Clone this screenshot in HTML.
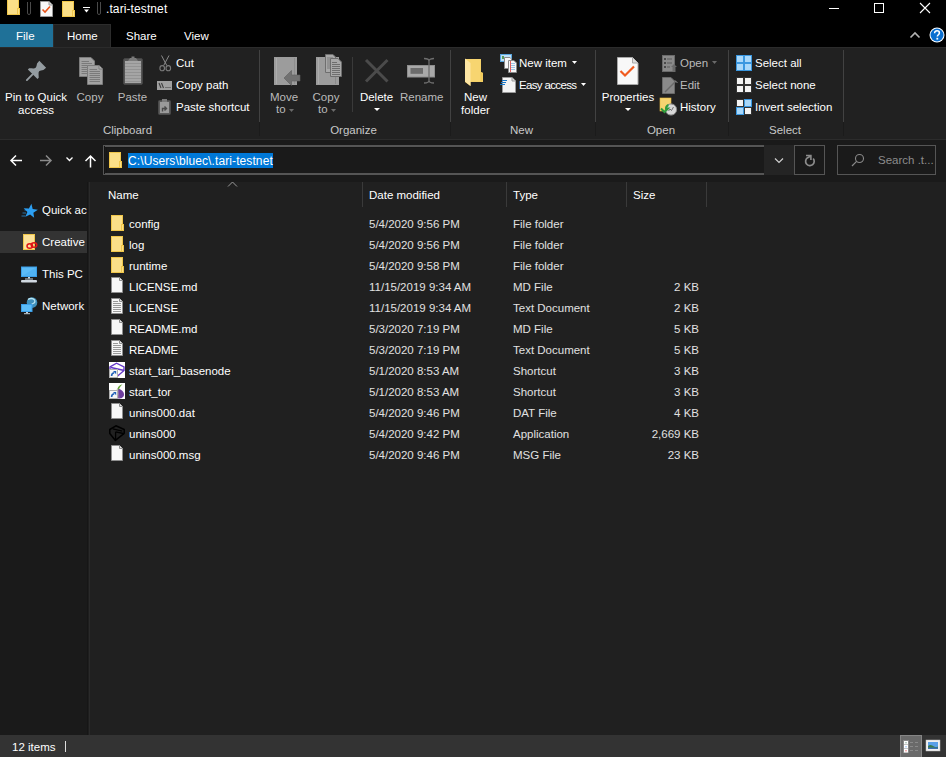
<!DOCTYPE html>
<html><head><meta charset="utf-8">
<style>
*{margin:0;padding:0;box-sizing:border-box}
html,body{width:946px;height:757px;overflow:hidden;background:#202020}
body{position:relative;font-family:"Liberation Sans",sans-serif;font-size:11.5px;color:#fff}
.a{position:absolute}
.t{position:absolute;line-height:14px;white-space:nowrap}
.c{text-align:center}
.g{color:#bababa}
.lbl{color:#c8c8c8}
.s{color:#e0e0e0}
svg{position:absolute;overflow:visible}
</style></head><body>
<!-- top black bars -->
<div class="a" style="left:0;top:0;width:946px;height:47px;background:#000"></div>
<!-- ribbon -->
<div class="a" style="left:0;top:47px;width:946px;height:92px;background:#212121;border-top:1px solid #2b2b2b"></div>
<div class="a" style="left:0;top:139px;width:946px;height:1px;background:#2c2c2c"></div>
<!-- address row -->
<div class="a" style="left:0;top:140px;width:946px;height:42px;background:#1a1a1a"></div>
<!-- nav pane -->
<div class="a" style="left:0;top:182px;width:87px;height:553px;background:#1a1a1a"></div>
<div class="a" style="left:87px;top:182px;width:1px;height:553px;background:#161616"></div>
<div class="a" style="left:88px;top:182px;width:1px;height:553px;background:#1e1e1e"></div>
<div class="a" style="left:89px;top:182px;width:1px;height:553px;background:#2a2a2a"></div>
<div class="a" style="left:0;top:231px;width:87px;height:22px;background:#333"></div>
<!-- status bar -->
<div class="a" style="left:0;top:735px;width:946px;height:22px;background:#333"></div>

<!-- TITLE BAR -->
<div class="t" style="left:106px;top:2px;font-size:12px;letter-spacing:0.1px">.tari-testnet</div>

<!-- TABS -->
<div class="a" style="left:0;top:24px;width:53px;height:23px;background:#1f7198"></div>
<div class="a" style="left:53px;top:24px;width:58px;height:23px;background:#202020;border:1px solid #2c2c2c;border-bottom:none"></div>
<div class="t" style="left:16px;top:29px">File</div>
<div class="t" style="left:67px;top:29px">Home</div>
<div class="t" style="left:126px;top:29px">Share</div>
<div class="t" style="left:184px;top:29px">View</div>


<!-- ICONS: title bar -->
<svg style="left:7px;top:-1px" width="14" height="16"><rect x="0" y="0" width="12" height="16" fill="#f0c64a"/><rect x="1" y="1" width="10" height="14" fill="#fbdf88"/><rect x="10" y="9" width="3" height="7" fill="#f0c64a"/><rect x="11" y="10" width="1" height="5" fill="#fbdf88"/></svg>
<svg style="left:27px;top:2px" width="4" height="13"><path d="M0.5 0V11A1.5 1.5 0 0 0 3.5 11V0" fill="none" stroke="#4a4a4a"/></svg>
<svg style="left:40px;top:1px" width="13" height="16"><path d="M0.5 0.5H9L12.5 4V15.5H0.5Z" fill="#f7f7f7" stroke="#9a9a9a"/><path d="M9 0.5V4H12.5" fill="#dcdcdc" stroke="#9a9a9a"/><path d="M2.5 8.5L5 11L10 5.5" fill="none" stroke="#e8541a" stroke-width="1.6"/></svg>
<svg style="left:62px;top:1px" width="14" height="16"><rect x="0" y="0" width="12" height="16" fill="#f0c64a"/><rect x="1" y="1" width="10" height="14" fill="#fbdf88"/><rect x="10" y="9" width="3" height="7" fill="#f0c64a"/><rect x="11" y="10" width="1" height="5" fill="#fbdf88"/></svg>
<svg style="left:83px;top:6px" width="8" height="7"><rect x="0" y="1" width="7" height="1" fill="#fff"/><path d="M1 3.5H6L3.5 6.5Z" fill="#fff"/></svg>
<svg style="left:97px;top:2px" width="4" height="13"><path d="M0.5 0V11A1.5 1.5 0 0 0 3.5 11V0" fill="none" stroke="#4a4a4a"/></svg>
<!-- window controls -->
<div class="a" style="left:829px;top:8px;width:10px;height:1px;background:#fff"></div>
<div class="a" style="left:874px;top:3px;width:10px;height:10px;border:1px solid #fff"></div>
<svg style="left:919px;top:2px" width="12" height="12"><path d="M1 1L11 11M11 1L1 11" stroke="#fff" stroke-width="1.1"/></svg>
<svg style="left:909px;top:31px" width="12" height="8"><path d="M1.5 6.5L6 2L10.5 6.5" fill="none" stroke="#b4b4b4" stroke-width="1.6"/></svg>
<svg style="left:929px;top:27px" width="17" height="17"><circle cx="8" cy="8" r="7.5" fill="#fff"/><circle cx="8" cy="8" r="6.5" fill="#0a6fd0"/><path d="M5.6 6.2C5.6 4.6 6.7 3.8 8 3.8C9.4 3.8 10.4 4.7 10.4 5.9C10.4 7.6 8.3 7.8 8.3 9.6" fill="none" stroke="#fff" stroke-width="1.5"/><rect x="7.4" y="10.8" width="1.8" height="1.8" fill="#fff"/></svg>

<!-- ribbon: clipboard -->
<svg style="left:20px;top:54px" width="32" height="32"><g transform="translate(22.7,10.25) rotate(45)"><path d="M-4.8 0H4.8L4.5 3.5C3.6 5 2.5 6 2.5 7.5C2.5 9 5 10.5 6.8 12.4V14.2H-6.8V12.4C-5 10.5 -2.5 9 -2.5 7.5C-2.5 6 -3.6 5 -4.5 3.5Z" fill="#949ca1"/><rect x="-0.95" y="13.5" width="1.9" height="9.8" rx="0.9" fill="#949ca1"/></g></svg>
<svg style="left:79px;top:57px" width="25" height="29"><path d="M0.5 0.5H12L15.5 4V19.5H0.5Z" fill="#a3a3a3" stroke="#7c7c7c"/><path d="M2.5 4.5H10M2.5 6.5H13M2.5 8.5H13M2.5 10.5H13M2.5 12.5H13M2.5 14.5H13M2.5 16.5H13" stroke="#7a7a7a"/><path d="M8.5 8.5H20L23.5 12V27.5H8.5Z" fill="#a3a3a3" stroke="#7c7c7c"/><path d="M20 8.5V12H23.5" fill="#b8b8b8" stroke="#7c7c7c"/><path d="M10.5 12.5H18M10.5 14.5H21M10.5 16.5H21M10.5 18.5H21M10.5 20.5H21M10.5 22.5H21M10.5 24.5H21" stroke="#7a7a7a"/></svg>
<svg style="left:123px;top:55px" width="21" height="31"><rect x="0.5" y="3.5" width="19" height="26" rx="1.5" fill="#555" stroke="#444"/><rect x="2" y="6" width="16" height="22" fill="#a5a5a5"/><path d="M2 8.5H18M2 11.5H18M2 14.5H18M2 17.5H18M2 20.5H18M2 23.5H18M2 26.5H18" stroke="#939393"/><path d="M5 6L7 3H8.5V1.5H11.5V3H13L15 6Z" fill="#7a7a7a"/></svg>
<svg style="left:159px;top:55px" width="13" height="17"><path d="M2.5 0.5L7.8 10.5M10 0.5L4.7 10.5" stroke="#8a8a8a" stroke-width="1"/><ellipse cx="3.2" cy="13.2" rx="2.3" ry="2.6" fill="none" stroke="#7a7a7a" stroke-width="1.1"/><ellipse cx="9.3" cy="13.2" rx="2.3" ry="2.6" fill="none" stroke="#7a7a7a" stroke-width="1.1"/></svg>
<svg style="left:157px;top:81px" width="16" height="10"><rect x="0" y="0" width="15" height="9" fill="#a0a0a0"/><path d="M2 2L4 7M4.5 2L6.5 7" stroke="#3e3e3e" stroke-width="1.1"/><path d="M8.5 6.5H9.5M10.5 6.5H11.5M12.5 6.5H13.5" stroke="#3e3e3e" stroke-width="1"/></svg>
<svg style="left:158px;top:99px" width="14" height="16"><rect x="0.5" y="1.5" width="12" height="14" rx="1" fill="#5a5a5a" stroke="#4a4a4a"/><rect x="2" y="3" width="9" height="11" fill="#9a9a9a"/><rect x="4" y="0" width="5" height="3" fill="#7a7a7a"/><path d="M4.5 12.5V9.5H8M6.5 7.5L8.5 9.5L6.5 11.5" fill="none" stroke="#4a4a4a" stroke-width="1.4"/></svg>
<div class="a" style="left:259px;top:50px;width:1px;height:72px;background:#424242"></div>
<div class="a" style="left:259px;top:122px;width:1px;height:14px;background:#1b1b1b"></div>


<!-- organize -->
<svg style="left:273px;top:56px" width="28" height="31"><rect x="1" y="1" width="23" height="28" fill="#9c9c9c"/><rect x="3" y="2" width="1" height="26" fill="#acacac"/><rect x="21" y="2" width="1" height="26" fill="#8e8e8e"/><path d="M11 22L18.5 14.5V19H27V25H18.5V29.5Z" fill="#717171"/><path d="M11 22L18.5 14.5V19H27V25H18.5V29.5Z" fill="none" stroke="#5e5e5e" stroke-width="0.6"/></svg>
<svg style="left:315px;top:54px" width="29" height="33"><rect x="1" y="3" width="23" height="28" fill="#9c9c9c"/><rect x="3" y="4" width="1" height="26" fill="#acacac"/><rect x="20" y="20" width="1" height="10" fill="#8a8a8a"/><path d="M10.5 0.5H18L20.5 3V18.5H10.5Z" fill="#a8a8a8" stroke="#6e6e6e"/><path d="M12 4H18M12 6H19M12 8H19M12 10H19M12 12H19M12 14H19" stroke="#7a7a7a"/><path d="M15.5 4.5H23L26.5 8V22.5H15.5Z" fill="#a8a8a8" stroke="#6e6e6e"/><path d="M17 8.5H22M17 10.5H25M17 12.5H25M17 14.5H25M17 16.5H25M17 18.5H25M17 20.5H25" stroke="#6e6e6e"/></svg>
<div class="a" style="left:352px;top:57px;width:1px;height:55px;background:#3a3a3a"></div>
<svg style="left:364px;top:58px" width="26" height="26"><path d="M2 2L23.5 23.5M23.5 2L2 23.5" stroke="#4b4b4b" stroke-width="3"/></svg>
<svg style="left:374px;top:108px" width="7" height="4"><path d="M0 0H6L3 3Z" fill="#fff"/></svg>
<svg style="left:406px;top:57px" width="30" height="28"><rect x="1.5" y="8.5" width="27" height="11.5" fill="#a9a9a9" stroke="#8e8e8e"/><rect x="4.5" y="11" width="12.5" height="5.8" fill="#6c6c6c"/><path d="M18 1.5C20.5 1.5 23 2.2 23 4C23 2.2 25.5 1.5 28 1.5M23 4V24M18 26C20.5 26 23 25.3 23 23.5C23 25.3 25.5 26 28 26" fill="none" stroke="#6e6e6e" stroke-width="1.3"/></svg>
<div class="a" style="left:450px;top:50px;width:1px;height:72px;background:#424242"></div>
<div class="a" style="left:450px;top:122px;width:1px;height:14px;background:#1b1b1b"></div>
<!-- new -->
<svg style="left:464px;top:58px" width="21" height="29"><path d="M1 1H17V14L19 15V24H6.5L6.5 28L1 24Z" fill="#f3cd60"/><path d="M1 1H16.5V14.5L18.5 15.5V23.5H1Z" fill="#f7d570"/><rect x="16.5" y="14.5" width="2" height="9" fill="#f2cb5a"/><path d="M1 0.5L6.5 5V28L1 23.5Z" fill="#fde6a4"/></svg>
<svg style="left:500px;top:54px" width="18" height="19"><rect x="0.5" y="0.5" width="11" height="7" fill="#bfe0f7" stroke="#5aa7e0"/><rect x="2" y="2" width="2" height="3" fill="#5a9a5a"/><path d="M4.5 3.5H10L11.5 5V14.5H4.5Z" fill="#f8f8f8" stroke="#8a8a8a"/><path d="M8.5 6.5H14L16.5 9V18.5H8.5Z" fill="#f8f8f8" stroke="#8a8a8a"/><path d="M10 9.5H15M10 11.5H15M10 13.5H15M10 15.5H15" stroke="#9cc4e8"/><path d="M10.5 7V18" stroke="#e06060"/></svg>
<svg style="left:572px;top:61px" width="6" height="4"><path d="M0 0H5L2.5 3Z" fill="#fff"/></svg>
<svg style="left:500px;top:77px" width="17" height="17"><path d="M2.5 0.5H12L15.5 4V15.5H2.5Z" fill="#f4f4f4" stroke="#9a9a9a"/><path d="M12 0.5V4H15.5" fill="#dcdcdc" stroke="#9a9a9a"/><path d="M2 3.5H7M1 5.5H6M0 7.5H5" stroke="#1a78c8" stroke-width="1"/></svg>
<svg style="left:581px;top:83px" width="6" height="4"><path d="M0 0H5L2.5 3Z" fill="#fff"/></svg>
<div class="a" style="left:595px;top:50px;width:1px;height:72px;background:#424242"></div>
<div class="a" style="left:595px;top:122px;width:1px;height:14px;background:#1b1b1b"></div>
<!-- open -->
<svg style="left:617px;top:57px" width="22" height="29"><path d="M0.5 0.5H15.5L21 6V27.5H0.5Z" fill="#f8f8f8" stroke="#a8a8a8"/><path d="M15.5 0.5V6H21" fill="#dedede" stroke="#a8a8a8"/><path d="M3.5 14L8 18.5L17 9.5" fill="none" stroke="#f05a1e" stroke-width="2.2"/></svg>
<svg style="left:625px;top:108px" width="7" height="4"><path d="M0 0H6L3 3Z" fill="#fff"/></svg>
<svg style="left:662px;top:55px" width="16" height="18"><rect x="0.5" y="0.5" width="12" height="16" fill="#8a8a8a" stroke="#6a6a6a"/><rect x="2" y="3" width="2" height="2" fill="#4a4a4a"/><rect x="2" y="7" width="2" height="2" fill="#4a4a4a"/><rect x="2" y="11" width="2" height="2" fill="#4a4a4a"/><path d="M5 4H10M5 8H10M5 12H8" stroke="#5a5a5a"/><path d="M9 12L12 9L15 12H13.5V17H10.5V12Z" fill="#6a6a6a"/></svg>
<svg style="left:712px;top:61px" width="6" height="4"><path d="M0 0H5L2.5 3Z" fill="#6a6a6a"/></svg>
<svg style="left:662px;top:77px" width="16" height="18"><path d="M0.5 0.5H9L12.5 4V16.5H0.5Z" fill="#8a8a8a" stroke="#6a6a6a"/><path d="M3 15L14 4" stroke="#6a6a6a" stroke-width="1.4"/><path d="M13 3.5L15.5 6" stroke="#8a8a8a" stroke-width="1"/></svg>
<svg style="left:660px;top:98px" width="18" height="18"><rect x="0" y="0" width="11" height="13" fill="#f6d470" stroke="#e6b840" stroke-width="0.6"/><circle cx="11" cy="11.5" r="5.6" fill="#d8d8d8" stroke="#8a8a8a"/><path d="M8.5 13L10 11L11.5 12.5L13.5 9" stroke="#555" stroke-width="0.8" fill="none"/><path d="M1 10.5L4.5 14L8 10.5H6C6 8.5 7 7.5 8.5 7" fill="none" stroke="#2e9a3a" stroke-width="2"/></svg>
<div class="a" style="left:728px;top:50px;width:1px;height:72px;background:#424242"></div>
<div class="a" style="left:728px;top:122px;width:1px;height:14px;background:#1b1b1b"></div>
<!-- select -->
<svg style="left:736px;top:55px" width="16" height="16"><rect x="0" y="0" width="16" height="16" fill="#3a97e0"/><rect x="1" y="1" width="6" height="6" fill="#a9d8fa"/><rect x="9" y="1" width="6" height="6" fill="#a9d8fa"/><rect x="1" y="9" width="6" height="6" fill="#a9d8fa"/><rect x="9" y="9" width="6" height="6" fill="#a9d8fa"/></svg>
<svg style="left:736px;top:77px" width="16" height="16"><rect x="0" y="0" width="16" height="16" fill="#333"/><rect x="1" y="1" width="6" height="6" fill="#f4f4f4"/><rect x="9" y="1" width="6" height="6" fill="#f4f4f4"/><rect x="1" y="9" width="6" height="6" fill="#f4f4f4"/><rect x="9" y="9" width="6" height="6" fill="#f4f4f4"/></svg>
<svg style="left:736px;top:99px" width="16" height="16"><rect x="0" y="0" width="8" height="8" fill="#333"/><rect x="8" y="0" width="8" height="8" fill="#3a97e0"/><rect x="0" y="8" width="8" height="8" fill="#3a97e0"/><rect x="8" y="8" width="8" height="8" fill="#333"/><rect x="1" y="1" width="6" height="6" fill="#f4f4f4"/><rect x="9" y="1" width="6" height="6" fill="#a9d8fa"/><rect x="1" y="9" width="6" height="6" fill="#a9d8fa"/><rect x="9" y="9" width="6" height="6" fill="#f4f4f4"/></svg>
<div class="a" style="left:843px;top:50px;width:1px;height:72px;background:#424242"></div>
<div class="a" style="left:843px;top:122px;width:1px;height:14px;background:#1b1b1b"></div>
<!-- move to / copy to arrows -->
<svg style="left:289px;top:109px" width="6" height="4"><path d="M0 0H5L2.5 3Z" fill="#6a6a6a"/></svg>
<svg style="left:331px;top:109px" width="6" height="4"><path d="M0 0H5L2.5 3Z" fill="#6a6a6a"/></svg>

<!-- RIBBON TEXT -->
<div class="t c" style="left:0;top:90px;width:72px">Pin to Quick</div>
<div class="t c" style="left:0;top:103px;width:72px">access</div>
<div class="t c g" style="left:70px;top:90px;width:40px">Copy</div>
<div class="t c g" style="left:112px;top:90px;width:41px">Paste</div>
<div class="t c lbl" style="left:90px;top:123px;width:75px">Clipboard</div>
<div class="t" style="left:176px;top:56px">Cut</div>
<div class="t" style="left:176px;top:78px">Copy path</div>
<div class="t" style="left:176px;top:100px">Paste shortcut</div>

<div class="t c g" style="left:264px;top:90px;width:40px">Move</div>
<div class="t c g" style="left:306px;top:90px;width:40px">Copy</div>
<div class="t g" style="left:276px;top:102px">to</div>
<div class="t g" style="left:318px;top:102px">to</div>
<div class="t c" style="left:356px;top:90px;width:41px">Delete</div>
<div class="t c g" style="left:400px;top:90px;width:41px">Rename</div>
<div class="t c lbl" style="left:315px;top:123px;width:77px">Organize</div>

<div class="t c" style="left:455px;top:90px;width:41px">New</div>
<div class="t c" style="left:455px;top:103px;width:41px">folder</div>
<div class="t" style="left:519px;top:56px">New item</div>
<div class="t" style="left:519px;top:78px;letter-spacing:-0.65px">Easy access</div>
<div class="t c lbl" style="left:496px;top:123px;width:51px">New</div>

<div class="t c" style="left:600px;top:90px;width:56px">Properties</div>
<div class="t g" style="left:680px;top:56px">Open</div>
<div class="t g" style="left:680px;top:78px">Edit</div>
<div class="t" style="left:680px;top:100px">History</div>
<div class="t c lbl" style="left:631px;top:123px;width:60px">Open</div>

<div class="t" style="left:755px;top:56px">Select all</div>
<div class="t" style="left:755px;top:78px">Select none</div>
<div class="t" style="left:755px;top:100px">Invert selection</div>
<div class="t c lbl" style="left:760px;top:123px;width:50px">Select</div>

<!-- ADDRESS -->
<div class="a" style="left:103px;top:145px;width:661px;height:30px;border:2px solid #555;border-right:none;background:#1a1a1a"></div>
<div class="a" style="left:104px;top:146px;width:1px;height:28px;background:#141414"></div>
<div class="a" style="left:105px;top:147px;width:659px;height:1px;background:#161616"></div>
<div class="a" style="left:106px;top:147px;width:1px;height:26px;background:#161616"></div>
<div class="a" style="left:764px;top:145px;width:30px;height:30px;background:#242424"></div>
<div class="a" style="left:794px;top:145px;width:31px;height:30px;border:1px solid #555"></div>
<div class="a" style="left:837px;top:145px;width:99px;height:30px;border:1px solid #555"></div>
<div class="a" style="left:128px;top:153px;width:145px;height:15px;background:#0078d7"></div>
<div class="t" style="left:128px;top:154px;font-size:12px;letter-spacing:0.1px">C:\Users\bluec\.tari-testnet</div>
<div class="t" style="left:878px;top:153px;color:#8c8c8c">Search .t...</div>

<!-- HEADERS -->
<div class="t" style="left:108px;top:188px">Name</div>
<div class="t" style="left:369px;top:188px">Date modified</div>
<div class="t" style="left:513px;top:188px">Type</div>
<div class="t" style="left:633px;top:188px">Size</div>
<div class="a" style="left:362px;top:182px;width:1px;height:25px;background:#3a3a3a"></div>
<div class="a" style="left:506px;top:182px;width:1px;height:25px;background:#3a3a3a"></div>
<div class="a" style="left:626px;top:182px;width:1px;height:25px;background:#3a3a3a"></div>
<div class="a" style="left:706px;top:182px;width:1px;height:25px;background:#3a3a3a"></div>

<!-- ROWS -->
<div class="t" style="left:129px;top:217px">config</div>
<div class="t s" style="left:369px;top:217px">5/4/2020 9:56 PM</div>
<div class="t s" style="left:513px;top:217px">File folder</div>
<div class="t" style="left:129px;top:238px">log</div>
<div class="t s" style="left:369px;top:238px">5/4/2020 9:56 PM</div>
<div class="t s" style="left:513px;top:238px">File folder</div>
<div class="t" style="left:129px;top:259px">runtime</div>
<div class="t s" style="left:369px;top:259px">5/4/2020 9:58 PM</div>
<div class="t s" style="left:513px;top:259px">File folder</div>
<div class="t" style="left:129px;top:280px">LICENSE.md</div>
<div class="t s" style="left:369px;top:280px">11/15/2019 9:34 AM</div>
<div class="t s" style="left:513px;top:280px">MD File</div>
<div class="t s" style="left:600px;width:99px;text-align:right;top:280px">2 KB</div>
<div class="t" style="left:129px;top:301px">LICENSE</div>
<div class="t s" style="left:369px;top:301px">11/15/2019 9:34 AM</div>
<div class="t s" style="left:513px;top:301px">Text Document</div>
<div class="t s" style="left:600px;width:99px;text-align:right;top:301px">2 KB</div>
<div class="t" style="left:129px;top:322px">README.md</div>
<div class="t s" style="left:369px;top:322px">5/3/2020 7:19 PM</div>
<div class="t s" style="left:513px;top:322px">MD File</div>
<div class="t s" style="left:600px;width:99px;text-align:right;top:322px">5 KB</div>
<div class="t" style="left:129px;top:343px">README</div>
<div class="t s" style="left:369px;top:343px">5/3/2020 7:19 PM</div>
<div class="t s" style="left:513px;top:343px">Text Document</div>
<div class="t s" style="left:600px;width:99px;text-align:right;top:343px">5 KB</div>
<div class="t" style="left:129px;top:364px">start_tari_basenode</div>
<div class="t s" style="left:369px;top:364px">5/1/2020 8:53 AM</div>
<div class="t s" style="left:513px;top:364px">Shortcut</div>
<div class="t s" style="left:600px;width:99px;text-align:right;top:364px">3 KB</div>
<div class="t" style="left:129px;top:385px">start_tor</div>
<div class="t s" style="left:369px;top:385px">5/1/2020 8:53 AM</div>
<div class="t s" style="left:513px;top:385px">Shortcut</div>
<div class="t s" style="left:600px;width:99px;text-align:right;top:385px">3 KB</div>
<div class="t" style="left:129px;top:406px">unins000.dat</div>
<div class="t s" style="left:369px;top:406px">5/4/2020 9:46 PM</div>
<div class="t s" style="left:513px;top:406px">DAT File</div>
<div class="t s" style="left:600px;width:99px;text-align:right;top:406px">4 KB</div>
<div class="t" style="left:129px;top:427px">unins000</div>
<div class="t s" style="left:369px;top:427px">5/4/2020 9:42 PM</div>
<div class="t s" style="left:513px;top:427px">Application</div>
<div class="t s" style="left:600px;width:99px;text-align:right;top:427px">2,669 KB</div>
<div class="t" style="left:129px;top:448px">unins000.msg</div>
<div class="t s" style="left:369px;top:448px">5/4/2020 9:46 PM</div>
<div class="t s" style="left:513px;top:448px">MSG File</div>
<div class="t s" style="left:600px;width:99px;text-align:right;top:448px">23 KB</div>

<svg style="left:111px;top:215px" width="14" height="16"><rect x="0" y="0" width="12" height="16" fill="#f0c64a"/><rect x="1" y="1" width="10" height="14" fill="#fbdf88"/><rect x="10" y="9" width="3" height="7" fill="#f0c64a"/><rect x="11" y="10" width="1" height="5" fill="#fbdf88"/></svg>
<svg style="left:111px;top:236px" width="14" height="16"><rect x="0" y="0" width="12" height="16" fill="#f0c64a"/><rect x="1" y="1" width="10" height="14" fill="#fbdf88"/><rect x="10" y="9" width="3" height="7" fill="#f0c64a"/><rect x="11" y="10" width="1" height="5" fill="#fbdf88"/></svg>
<svg style="left:111px;top:257px" width="14" height="16"><rect x="0" y="0" width="12" height="16" fill="#f0c64a"/><rect x="1" y="1" width="10" height="14" fill="#fbdf88"/><rect x="10" y="9" width="3" height="7" fill="#f0c64a"/><rect x="11" y="10" width="1" height="5" fill="#fbdf88"/></svg>
<svg style="left:111px;top:277px" width="13" height="16"><path d="M0.5 0.5H8.5L11.5 3.5V15.5H0.5Z" fill="#f7f7f7" stroke="#8e8e8e"/><path d="M8.5 0.5V3.5H11.5" fill="#e4e4e4" stroke="#8e8e8e"/></svg>
<svg style="left:111px;top:298px" width="13" height="16"><path d="M0.5 0.5H8.5L11.5 3.5V15.5H0.5Z" fill="#f7f7f7" stroke="#8e8e8e"/><path d="M8.5 0.5V3.5H11.5" fill="#e4e4e4" stroke="#8e8e8e"/><path d="M2 3.5H7M2 5.5H10M2 7.5H10M2 9.5H10M2 11.5H10M2 13.5H10" stroke="#9a9a9a"/></svg>
<svg style="left:111px;top:319px" width="13" height="16"><path d="M0.5 0.5H8.5L11.5 3.5V15.5H0.5Z" fill="#f7f7f7" stroke="#8e8e8e"/><path d="M8.5 0.5V3.5H11.5" fill="#e4e4e4" stroke="#8e8e8e"/></svg>
<svg style="left:111px;top:340px" width="13" height="16"><path d="M0.5 0.5H8.5L11.5 3.5V15.5H0.5Z" fill="#f7f7f7" stroke="#8e8e8e"/><path d="M8.5 0.5V3.5H11.5" fill="#e4e4e4" stroke="#8e8e8e"/><path d="M2 3.5H7M2 5.5H10M2 7.5H10M2 9.5H10M2 11.5H10M2 13.5H10" stroke="#9a9a9a"/></svg>
<svg style="left:109px;top:362px" width="16" height="16"><rect x="0" y="0" width="16" height="16" fill="#fff"/><path d="M1 8V5L7.5 1.2L15 5V8.5L7.5 15M2 5.5L14.2 8.3M6.5 6.5V9" fill="none" stroke="#6438c8" stroke-width="1.4"/><g><rect x="0.5" y="7.5" width="8" height="8" fill="#f6f6f6" stroke="#b0b0b0"/><path d="M2.6 14C2.6 12 3.5 11 5.2 10.8" fill="none" stroke="#1f5fb8" stroke-width="1.6"/><path d="M4 9H7.2V12.2Z" fill="#1f5fb8"/></g></svg>
<svg style="left:109px;top:383px" width="16" height="16"><rect x="0" y="0" width="16" height="16" fill="#fff"/><path d="M9 5.5C12.5 6.5 15.5 9 15 12C14.5 14.8 12 15.5 10 15.5C7.5 15.5 6.5 13.5 7 10.5C7.3 8.5 8.3 7 9 5.5Z" fill="#6e3e9e"/><path d="M9 5.5C7 7.5 4 8.5 4 11.5C4 14 5.5 15.5 9 15.5C8 14 7.6 12 8.2 10C8.7 8.5 9 7 9 5.5Z" fill="#d9d4b4"/><path d="M9 5.5C9.2 8 9.5 11 10 15.5" fill="none" stroke="#a99ab0" stroke-width="0.6"/><path d="M8.5 6C9 3.5 10.5 2 13.5 1.2C11.8 2.8 10.5 4.5 10 6.5Z" fill="#68a838"/><g><rect x="0.5" y="7.5" width="8" height="8" fill="#f6f6f6" stroke="#b0b0b0"/><path d="M2.6 14C2.6 12 3.5 11 5.2 10.8" fill="none" stroke="#1f5fb8" stroke-width="1.6"/><path d="M4 9H7.2V12.2Z" fill="#1f5fb8"/></g></svg>
<svg style="left:111px;top:403px" width="13" height="16"><path d="M0.5 0.5H8.5L11.5 3.5V15.5H0.5Z" fill="#f7f7f7" stroke="#8e8e8e"/><path d="M8.5 0.5V3.5H11.5" fill="#e4e4e4" stroke="#8e8e8e"/></svg>
<svg style="left:109px;top:425px" width="17" height="17"><path d="M6.9 0.8L0.8 4.5V8.6L6.4 15.4L15.2 8.3V4.5Z" fill="none" stroke="#000" stroke-width="1.5" stroke-linejoin="round"/><path d="M3.8 3.8L13.3 6.2M6.6 6.8V15M6.6 6.8L14.5 8.5" fill="none" stroke="#000" stroke-width="1.3"/></svg>
<svg style="left:111px;top:445px" width="13" height="16"><path d="M0.5 0.5H8.5L11.5 3.5V15.5H0.5Z" fill="#f7f7f7" stroke="#8e8e8e"/><path d="M8.5 0.5V3.5H11.5" fill="#e4e4e4" stroke="#8e8e8e"/></svg>
<!-- nav arrows -->
<svg style="left:9px;top:154px" width="14" height="13"><path d="M13 6.5H2M7 1.5L2 6.5L7 11.5" fill="none" stroke="#fff" stroke-width="1.5"/></svg>
<svg style="left:39px;top:154px" width="14" height="13"><path d="M1 6.5H12M7 1.5L12 6.5L7 11.5" fill="none" stroke="#8a8a8a" stroke-width="1.5"/></svg>
<svg style="left:65px;top:156px" width="9" height="7"><path d="M1.5 1.5L4.5 4.5L7.5 1.5" fill="none" stroke="#fff" stroke-width="1.3"/></svg>
<svg style="left:84px;top:154px" width="13" height="14"><path d="M6.5 13.5V2M1.5 7L6.5 2L11.5 7" fill="none" stroke="#fff" stroke-width="1.5"/></svg>
<!-- address folder -->
<svg style="left:109px;top:152px" width="14" height="16"><rect x="0" y="0" width="12" height="16" fill="#f0c64a"/><rect x="1" y="1" width="10" height="14" fill="#fbdf88"/><rect x="10" y="9" width="3" height="7" fill="#f0c64a"/><rect x="11" y="10" width="1" height="5" fill="#fbdf88"/></svg>
<svg style="left:774px;top:157px" width="10" height="7"><path d="M1 1.5L5 5.5L9 1.5" fill="none" stroke="#d0d0d0" stroke-width="1.2"/></svg>
<svg style="left:803px;top:153px" width="14" height="14"><path d="M10.19 5.54A4.3 4.3 0 1 1 4.3 4.9L7.6 2.9" fill="none" stroke="#8c8c8c" stroke-width="1.7"/><path d="M3 2.5H7.9V6.9" fill="none" stroke="#8c8c8c" stroke-width="1.6"/></svg>
<svg style="left:851px;top:153px" width="14" height="14"><circle cx="8.5" cy="5.5" r="4" fill="none" stroke="#8a8a8a" stroke-width="1.1"/><path d="M5.6 8.4L1 13" stroke="#8a8a8a" stroke-width="1.2"/></svg>
<!-- sort arrow -->
<svg style="left:227px;top:181px" width="11" height="7"><path d="M1 5.5L5.5 1L10 5.5" fill="none" stroke="#9a9a9a" stroke-width="1"/></svg>

<svg style="left:21px;top:204px" width="18" height="16"><polygon points="10.40,-0.15 11.68,4.95 16.86,5.85 12.40,8.65 13.15,13.85 9.12,10.48 4.40,12.80 6.36,7.92 2.70,4.15 7.94,4.50" fill="#2c9ff2"/><path d="M3.5 6H6.5M1.5 9H5M0.5 12H4.5" stroke="#2c9ff2" stroke-width="0.9" opacity="0.75"/></svg>
<svg style="left:23px;top:234px" width="16" height="17"><rect x="0" y="0" width="12" height="16" fill="#f0c64a"/><rect x="1" y="1" width="10" height="14" fill="#fde39a"/><ellipse cx="6.8" cy="12" rx="2.8" ry="2.3" fill="none" stroke="#e01414" stroke-width="1.5"/><ellipse cx="11" cy="11" rx="2.8" ry="2.3" fill="none" stroke="#e01414" stroke-width="1.5"/></svg>
<svg style="left:21px;top:266px" width="17" height="17"><rect x="0" y="0.5" width="16" height="10.5" fill="#3a9ee8"/><rect x="1" y="1.5" width="14" height="8.5" fill="#5cbcf8"/><path d="M1 10L15 1.5V10Z" fill="#48aef2" opacity="0.6"/><rect x="7" y="11" width="2" height="1.5" fill="#c8d4dc"/><rect x="4" y="12.5" width="8" height="1" fill="#c8d4dc"/><rect x="0" y="14" width="16" height="2.5" rx="1" fill="#d0d8e0"/></svg>
<svg style="left:21px;top:297px" width="17" height="18"><circle cx="11" cy="5.6" r="5.3" fill="#3f8fba"/><path d="M7 2.5C9 1 12 1.2 13.5 3C14.5 4.5 13.5 6 12 6.5C10.5 7 9.5 8 10 10" fill="none" stroke="#b8e4f4" stroke-width="1.3"/><rect x="0" y="7" width="11.5" height="8" fill="#3a9ee8"/><rect x="1" y="8" width="9.5" height="6" fill="#5cbcf8"/><rect x="5" y="15" width="2" height="1.2" fill="#c8d4dc"/><rect x="3" y="16.2" width="6" height="1" fill="#c8d4dc"/></svg>

<!-- NAV -->
<div class="t" style="left:42px;top:203px;width:45px;overflow:hidden">Quick access</div>
<div class="t" style="left:42px;top:235px;width:45px;overflow:hidden">Creative Cloud Files</div>
<div class="t" style="left:42px;top:267px">This PC</div>
<div class="t" style="left:42px;top:299px;width:45px;overflow:hidden">Network</div>


<div class="a" style="left:900px;top:735px;width:22px;height:22px;background:#6a6a6a;border:1px solid #858585;border-bottom:none"></div>
<svg style="left:903px;top:740px" width="18" height="14"><rect x="0" y="0" width="6" height="13" fill="#888"/><rect x="1" y="1" width="4" height="3.5" fill="#fff"/><rect x="1" y="5" width="4" height="3.5" fill="#fff"/><rect x="1" y="9" width="4" height="3.5" fill="#fff"/><rect x="2.5" y="2.3" width="1" height="1" fill="#3a7a5a"/><rect x="2.5" y="6.3" width="1" height="1" fill="#3a8af0"/><rect x="2.5" y="10.3" width="1" height="1" fill="#e02020"/><path d="M7 2.5H10M12 2.5H15M7 6.5H10M12 6.5H15M7 10.5H10M12 10.5H15" stroke="#8a8a8a"/></svg>
<svg style="left:926px;top:740px" width="14" height="11"><rect x="0" y="0" width="14" height="11" fill="#f0f0f0" stroke="#c0c0c0" stroke-width="0.5"/><rect x="2" y="2" width="10" height="7" fill="#5aa0e8"/><path d="M2 6C4 4.5 6 5 8 6.5C10 7.5 11 7 12 6.5V9H2Z" fill="#3a7a4a"/><rect x="2" y="7.5" width="10" height="1.5" fill="#3a70b0"/></svg>

<!-- STATUS -->
<div class="t" style="left:12px;top:740px">12 items</div>
<div class="a" style="left:65px;top:741px;width:1px;height:11px;background:#ddd"></div>
</body></html>
